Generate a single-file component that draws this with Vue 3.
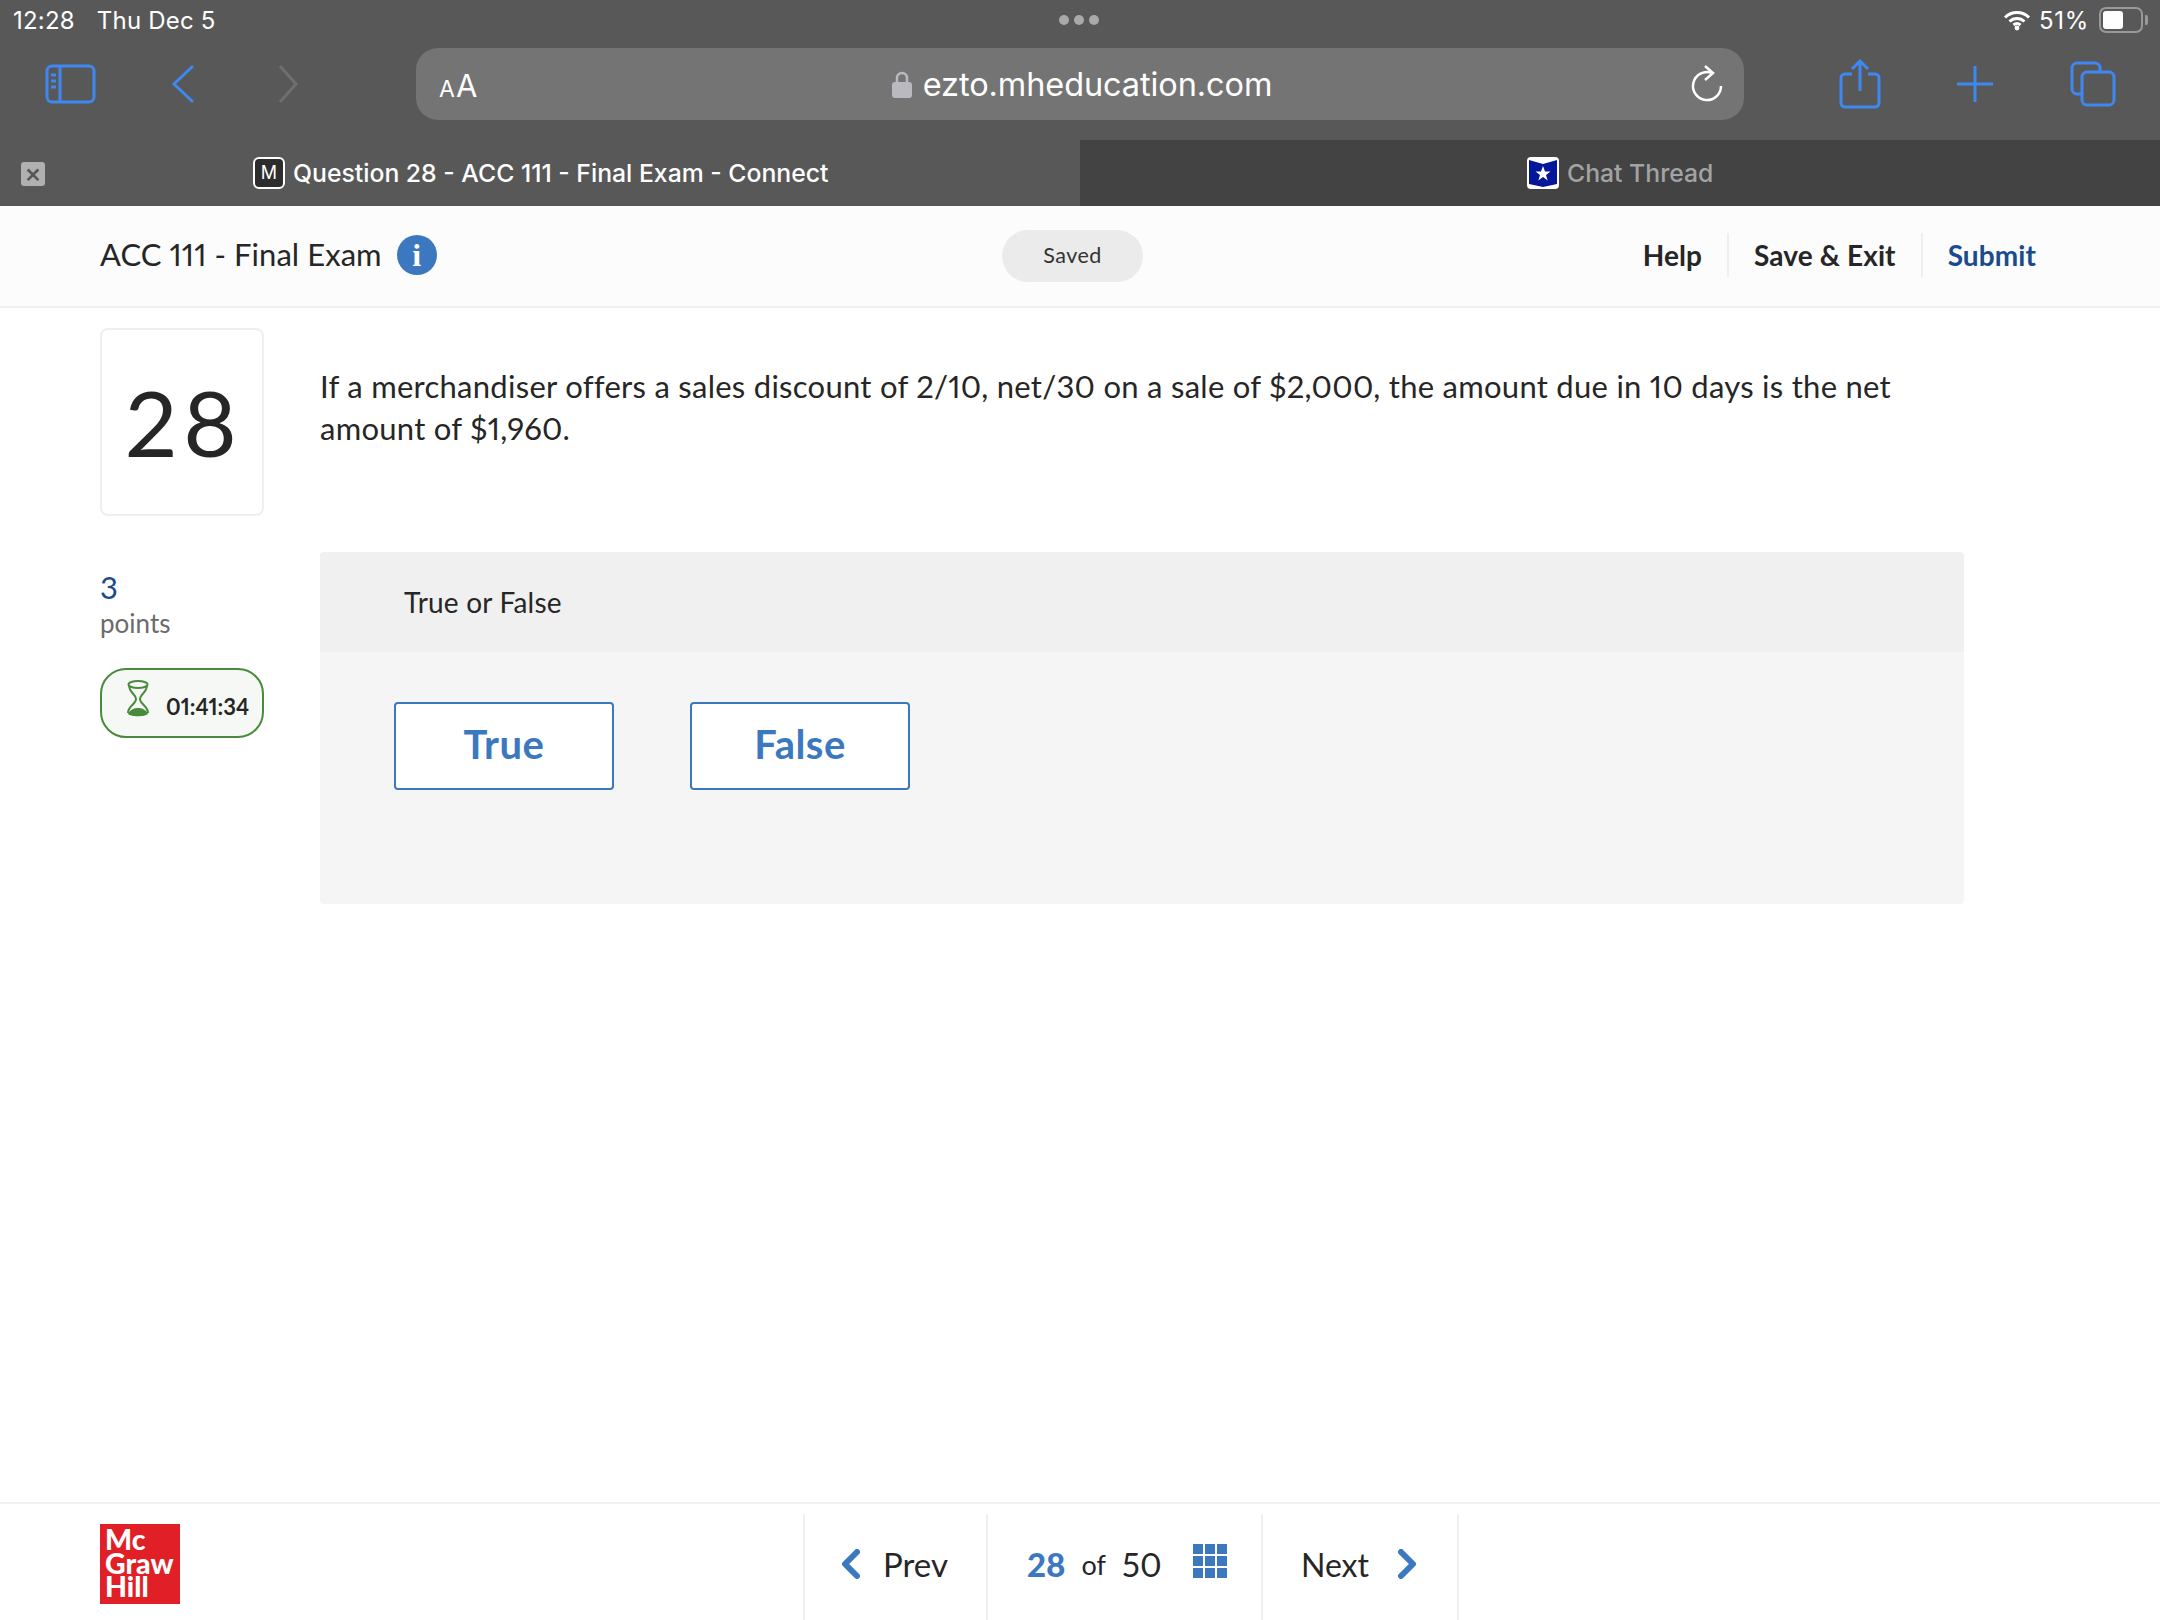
<script setup>
const grid = Array.from({ length: 9 })
</script>

<template>
  <div class="page">
    <div class="chrome">
      <div class="status">
        <div class="status-left"><span>12:28</span><span>Thu Dec 5</span></div>
        <div class="dots"><i></i><i></i><i></i></div>
        <div class="status-right">
          <svg width="28" height="22" viewBox="0 0 28 22"><path d="M2 8.500a17 17 0 0 1 24 0M6.500 12.500a11 11 0 0 1 15 0M10.500 16a5.500 5.500 0 0 1 7 0" fill="none" stroke="#fff" stroke-width="3"/><circle cx="14" cy="19" r="2.400" fill="#fff"/></svg>
          <span>51%</span>
          <div class="battery"><div class="battery-fill"></div></div>
          <div class="battery-cap"></div>
        </div>
      </div>
      <div class="toolbar">
        <div class="nav-icons">
          <svg width="52" height="42" viewBox="0 0 52 42" fill="none" stroke="#3f88f2" stroke-width="3"><rect x="2" y="3" width="47" height="36" rx="5"/><path d="M15 3v36M6 12h5M6 18h5M6 24h5"/></svg>
          <svg width="26" height="42" viewBox="0 0 26 42" fill="none" stroke="#3f88f2" stroke-width="3"><path d="M22 3 3 21l19 18"/></svg>
          <svg width="26" height="42" viewBox="0 0 26 42" fill="none" stroke="#6f6f6f" stroke-width="3"><path d="M5 3l16 18L5 39"/></svg>
        </div>
        <div class="address">
          <span class="aa"><small>A</small>A</span>
          <div class="url">
            <svg width="20" height="28" viewBox="0 0 20 28"><path d="M5 13V8a5 5 0 0 1 10 0v5" fill="none" stroke="#b9b9bf" stroke-width="2.500"/><rect x="0" y="12" width="20" height="16" rx="3" fill="#b9b9bf"/></svg>
            <span>ezto.mheducation.com</span>
          </div>
          <svg class="reload" width="34" height="38" viewBox="0 0 34 38" fill="none" stroke="#fff" stroke-width="2.500"><path d="M22 8A14 14 0 1 0 31 21"/><path d="M15 1l8 7-8 7"/></svg>
        </div>
        <div class="actions">
          <svg width="44" height="50" viewBox="0 0 44 50" fill="none" stroke="#3f88f2" stroke-width="3"><path d="M14 15H7a4 4 0 0 0-4 4v25a4 4 0 0 0 4 4h30a4 4 0 0 0 4-4V19a4 4 0 0 0-4-4h-7"/><path d="M22 32V3M14 10l8-8 8 8"/></svg>
          <svg width="38" height="38" viewBox="0 0 38 38" fill="none" stroke="#3f88f2" stroke-width="3"><path d="M19 1v36M1 19h36"/></svg>
          <svg width="46" height="46" viewBox="0 0 46 46" fill="none" stroke="#3f88f2" stroke-width="3"><path d="M11 33H7a5 5 0 0 1-5-5V7a5 5 0 0 1 5-5h18a5 5 0 0 1 5 5v4"/><rect x="12" y="11" width="32" height="33" rx="5"/></svg>
        </div>
      </div>
      <div class="tabs">
        <div class="tab tab-active">
          <div class="tab-close">×</div>
          <div class="favicon-m">M</div>
          <span>Question 28 - ACC 111 - Final Exam - Connect</span>
        </div>
        <div class="tab tab-idle">
          <svg class="favicon-star" width="32" height="32" viewBox="0 0 32 32"><rect width="32" height="32" rx="4" fill="#fff"/><path d="M2 3l14 4 14-4v24l-14 3-14-3z" fill="#04169a"/><path d="M16 9l2 5.500h5.500l-4.500 3.500 1.700 5.500L16 20l-4.700 3.500L13 18l-4.500-3.500H14z" fill="#fff"/></svg>
          <span>Chat Thread</span>
        </div>
      </div>
    </div>

    <header class="head">
      <div class="head-title">
        <span>ACC 111 - Final Exam</span>
        <div class="info">i</div>
      </div>
      <div class="saved">Saved</div>
      <nav class="head-links">
        <a>Help</a>
        <a>Save &amp; Exit</a>
        <a class="submit">Submit</a>
      </nav>
    </header>

    <main class="main">
      <aside class="side">
        <div class="num-box">28</div>
        <div class="points"><b>3</b><span>points</span></div>
        <div class="timer">
          <svg width="24" height="38" viewBox="0 0 24 38" fill="none" stroke="#4a8a3c" stroke-width="2"><ellipse cx="12" cy="4.500" rx="9.500" ry="3.500"/><path d="M3 5c0 8 7 9 7 14s-8 7-8 14M21 5c0 8-7 9-7 14s8 7 8 14"/><path d="M2 34c2-5 7-6 10-6s8 1 10 6c-3 3-17 3-20 0z" fill="#4a8a3c" stroke="none"/></svg>
          <span>01:41:34</span>
        </div>
      </aside>
      <section class="content">
        <p class="question">If a merchandiser offers a sales discount of 2/10, net/30 on a sale of $2,000, the amount due in 10 days is the net amount of $1,960.</p>
        <div class="panel">
          <div class="panel-head">True or False</div>
          <div class="panel-body">
            <button class="answer">True</button>
            <button class="answer">False</button>
          </div>
        </div>
      </section>
    </main>

    <footer class="foot">
      <div class="logo"><span>Mc</span><span>Graw</span><span>Hill</span></div>
      <div class="pager">
        <div class="pager-cell prev">
          <svg width="20" height="30" viewBox="0 0 20 30" fill="none" stroke="#3b78bf" stroke-width="6" stroke-linecap="round" stroke-linejoin="round"><path d="M16 3 4 15l12 12"/></svg>
          <span>Prev</span>
        </div>
        <div class="pager-cell count">
          <b>28</b><span class="of">of</span><span>50</span>
          <div class="grid"><i v-for="(_, n) in grid" :key="n"></i></div>
        </div>
        <div class="pager-cell next">
          <span>Next</span>
          <svg width="20" height="30" viewBox="0 0 20 30" fill="none" stroke="#3b78bf" stroke-width="6" stroke-linecap="round" stroke-linejoin="round"><path d="M4 3l12 12L4 27"/></svg>
        </div>
      </div>
    </footer>
  </div>
</template>

<style scoped>
.page {
  width: 2160px;
  height: 1620px;
  display: flex;
  flex-direction: column;
  background: #fff;
  color: #262626;
  font-family: Lato, "Open Sans", sans-serif;
  font-feature-settings: "pnum";
  overflow: hidden;
}
.chrome { background: #585858; color: #fff; font-family: Inter, sans-serif; }
.status {
  height: 40px;
  padding: 0 12px 0 13px;
  display: flex;
  align-items: center;
  font-size: 24px;
  letter-spacing: 0.2px;
}
.status-left { display: flex; gap: 22px; flex: 1; }
.dots { display: flex; gap: 5px; margin-left: -4px; }
.dots i { width: 10px; height: 10px; border-radius: 50%; background: #a9a9a9; }
.status-right { flex: 1; display: flex; align-items: center; justify-content: flex-end; gap: 8px; }
.status-right span { letter-spacing: 0.7px; }
.battery { width: 44px; height: 26px; border: 2px solid #999; border-radius: 7px; padding: 2px; box-sizing: border-box; margin-left: 2px; }
.battery-fill { width: 20px; height: 100%; background: #fff; border-radius: 3px; }
.battery-cap { width: 3px; height: 10px; background: #999; margin-left: -6px; border-radius: 0 2px 2px 0; }
.toolbar { height: 100px; display: flex; align-items: flex-start; padding-top: 8px; box-sizing: border-box; }
.nav-icons { width: 416px; height: 72px; display: flex; align-items: center; padding-left: 45px; box-sizing: border-box; }
.nav-icons svg:nth-child(2) { margin-left: 74px; }
.nav-icons svg:nth-child(3) { margin-left: 78px; }
.address {
  width: 1328px;
  height: 72px;
  background: #747474;
  border-radius: 22px;
  display: flex;
  align-items: center;
  padding: 0 20px 0 23px;
  box-sizing: border-box;
}
.aa { font-size: 31px; width: 44px; margin-top: 2px; }
.aa small { font-size: 23px; margin-right: 1px; }
.url {
  flex: 1;
  display: flex;
  align-items: center;
  justify-content: center;
  gap: 11px;
  font-size: 32.500px;
  letter-spacing: -0.1px;
  margin-left: -9px;
}
.actions { flex: 1; height: 72px; display: flex; align-items: center; padding-left: 94px; }
.actions svg:nth-child(2) { margin-left: 74px; }
.actions svg:nth-child(3) { margin-left: 76px; }
.tabs { height: 66px; display: flex; font-size: 24.750px; font-weight: 500; }
.tab { width: 1080px; display: flex; align-items: center; position: relative; padding-left: 253px; box-sizing: border-box; }
.tab-idle { background: #434343; color: #a3a3a3; padding-left: 447px; }
.tab-close {
  position: absolute;
  left: 21px;
  top: 22px;
  width: 24px;
  height: 24px;
  background: #b0b0b0;
  color: #555;
  border-radius: 3px;
  font-size: 26px;
  line-height: 22px;
  text-align: center;
}
.favicon-m {
  width: 32px;
  height: 32px;
  background: #2d2d2d;
  border: 2px solid #fff;
  border-radius: 6px;
  box-sizing: border-box;
  font-size: 18px;
  font-weight: 400;
  text-align: center;
  line-height: 28px;
  margin-right: 8px;
}
.favicon-star { margin-right: 8px; }
.head {
  height: 102px;
  box-sizing: border-box;
  border-bottom: 2px solid #f0f0f0;
  background: #fcfcfc;
  display: flex;
  align-items: center;
  padding-left: 100px;
}
.head-title { display: flex; align-items: center; gap: 15px; font-size: 31px; letter-spacing: 0.05px; width: 902px; line-height: 36px; margin-top: -2px; }
.head-title span { margin-top: -3px; }
.info {
  width: 40px;
  height: 40px;
  border-radius: 50%;
  background: #3b78bf;
  color: #fff;
  font: bold 32px/40px "Liberation Serif", serif;
  text-align: center;
}
.saved {
  width: 141px;
  height: 52px;
  border-radius: 26px;
  background: #ebebeb;
  font-size: 21.500px;
  letter-spacing: 0.5px;
  color: #333;
  line-height: 50px;
  text-align: center;
}
.head-links { display: flex; margin-left: auto; margin-right: 99px; font-size: 28px; font-weight: 700; height: 44px; align-items: center; margin-top: -2px; }
.head-links a { padding: 0 25px; line-height: 44px; border-right: 2px solid #eee; letter-spacing: 0.1px; }
.head-links .submit { color: #1a4b8c; border: 0; }
.main { flex: 1; display: flex; padding-left: 100px; }
.side { width: 164px; margin-right: 56px; padding-top: 20px; }
.num-box {
  height: 188px;
  border: 2px solid #efefef;
  border-radius: 8px;
  box-sizing: border-box;
  font-size: 92px;
  line-height: 184px;
  letter-spacing: 6px;
  text-indent: 4px;
  text-align: center;
}
.points { margin-top: 53px; display: flex; flex-direction: column; }
.points b { font-size: 31px; font-weight: 400; color: #1a4b8c; line-height: 36px; }
.points span { font-size: 26px; color: #6b6b6b; line-height: 36px; }
.timer {
  margin-top: 27px;
  height: 70px;
  border: 2px solid #4a8a3c;
  border-radius: 26px;
  background: #f6f8f5;
  box-sizing: border-box;
  display: flex;
  align-items: center;
  padding-left: 24px;
  gap: 16px;
  font-size: 22px;
  font-weight: 700;
}
.timer svg { margin-top: -8px; }
.timer span { margin-top: 7px; }
.content { width: 1644px; padding-top: 57px; }
.question { margin: 0; font-size: 31px; line-height: 42px; height: 187px; padding-right: 50px; box-sizing: border-box; letter-spacing: 0.27px; }
.panel { border-radius: 4px; overflow: hidden; }
.panel-head { height: 100px; background: #f0f0f0; padding-left: 84px; font-size: 28px; letter-spacing: 0.2px; line-height: 100px; }
.panel-body { height: 252px; background: #f5f5f5; display: flex; gap: 76px; align-items: flex-start; padding: 50px 0 0 74px; box-sizing: border-box; }
.answer {
  width: 220px;
  height: 88px;
  background: #fff;
  border: 2px solid #3b78bf;
  border-radius: 4px;
  color: #3b78bf;
  font: 700 40px/80px Lato, sans-serif;
  letter-spacing: 0.5px;
  padding: 0 0 4px;
}
.foot {
  height: 118px;
  box-sizing: border-box;
  border-top: 2px solid #f0f0f0;
  display: flex;
  padding-left: 100px;
}
.logo {
  width: 80px;
  height: 80px;
  margin-top: 20px;
  background: #e01f26;
  color: #fff;
  font-size: 28.500px;
  font-weight: 900;
  padding: 4px 0 0 5px;
  box-sizing: border-box;
  display: flex;
  flex-direction: column;
}
.logo span { height: 23.500px; line-height: 23.500px; }
.pager { display: flex; margin: 10px 0 0 623px; border-left: 2px solid #efefef; font-size: 33px; }
.pager-cell { display: flex; align-items: center; border-right: 2px solid #efefef; box-sizing: border-box; padding-bottom: 6px; }
.prev { width: 183px; padding-left: 36px; gap: 22px; }
.count { width: 275px; padding-left: 39px; }
.count b { color: #3b78bf; font-weight: 900; }
.of { font-size: 27px; margin: 0 16px; }
.grid { display: grid; grid-template-columns: repeat(3, 10px); gap: 2px; margin-left: 31px; margin-top: -6px; }
.grid i { height: 10px; background: #3b78bf; }
.next { width: 196px; padding-left: 38px; gap: 28px; }
.next span { font-size: 32px; }
</style>
